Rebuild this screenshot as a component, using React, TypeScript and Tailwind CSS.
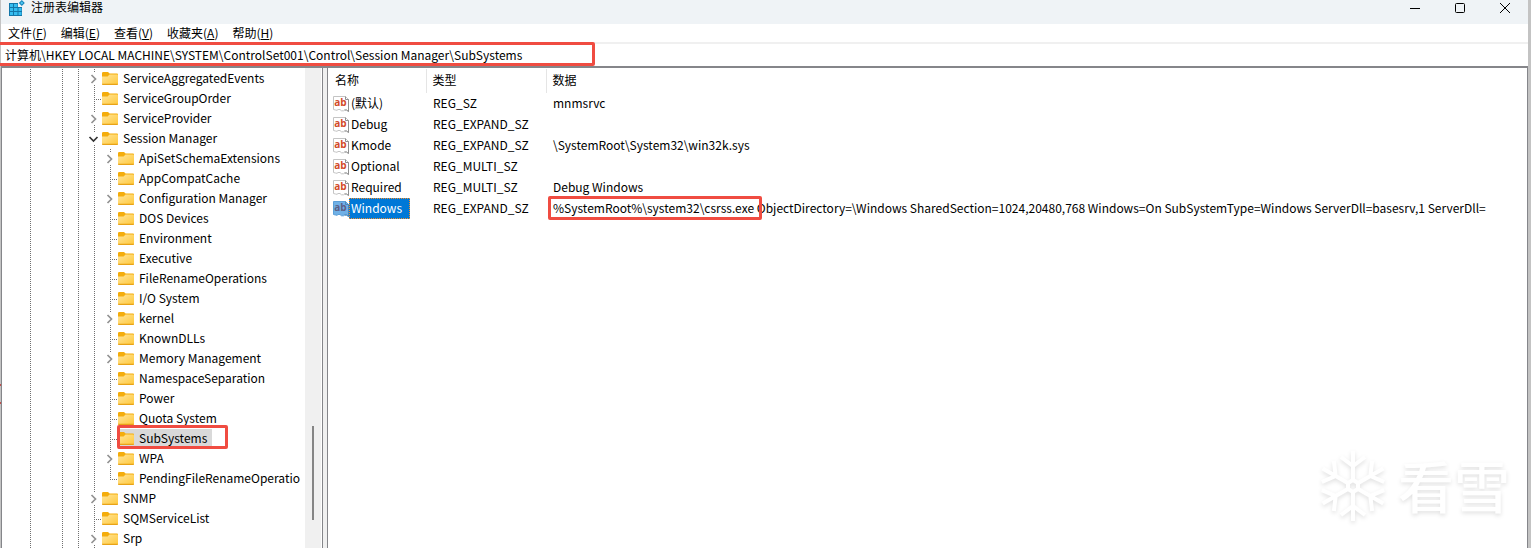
import React, { FC, ReactNode } from "react";

type Kind = "leaf" | "last" | "closed" | "open";

interface TreeItem {
  name: string;
  kind: Kind;
  child?: boolean;
  selected?: boolean;
}

const treeItems: TreeItem[] = [
  { name: "ServiceAggregatedEvents", kind: "closed" },
  { name: "ServiceGroupOrder", kind: "leaf" },
  { name: "ServiceProvider", kind: "closed" },
  { name: "Session Manager", kind: "open" },
  { name: "ApiSetSchemaExtensions", kind: "closed", child: true },
  { name: "AppCompatCache", kind: "leaf", child: true },
  { name: "Configuration Manager", kind: "closed", child: true },
  { name: "DOS Devices", kind: "leaf", child: true },
  { name: "Environment", kind: "leaf", child: true },
  { name: "Executive", kind: "leaf", child: true },
  { name: "FileRenameOperations", kind: "leaf", child: true },
  { name: "I/O System", kind: "leaf", child: true },
  { name: "kernel", kind: "closed", child: true },
  { name: "KnownDLLs", kind: "leaf", child: true },
  { name: "Memory Management", kind: "closed", child: true },
  { name: "NamespaceSeparation", kind: "leaf", child: true },
  { name: "Power", kind: "leaf", child: true },
  { name: "Quota System", kind: "leaf", child: true },
  { name: "SubSystems", kind: "leaf", child: true, selected: true },
  { name: "WPA", kind: "closed", child: true },
  { name: "PendingFileRenameOperatio", kind: "last", child: true },
  { name: "SNMP", kind: "closed" },
  { name: "SQMServiceList", kind: "leaf" },
  { name: "Srp", kind: "closed" },
];

const menus = [
  { label: "文件", mnemonic: "F" },
  { label: "编辑", mnemonic: "E" },
  { label: "查看", mnemonic: "V" },
  { label: "收藏夹", mnemonic: "A" },
  { label: "帮助", mnemonic: "H" },
];

const values = [
  { name: "(默认)", type: "REG_SZ", data: "mnmsrvc" },
  { name: "Debug", type: "REG_EXPAND_SZ", data: "" },
  { name: "Kmode", type: "REG_EXPAND_SZ", data: "\\SystemRoot\\System32\\win32k.sys" },
  { name: "Optional", type: "REG_MULTI_SZ", data: "" },
  { name: "Required", type: "REG_MULTI_SZ", data: "Debug Windows" },
];

const dotsDown = "w-px bg-[repeating-linear-gradient(to_bottom,#707070_0_1px,transparent_1px_2px)]";
const dotsAcross = "h-px bg-[repeating-linear-gradient(to_right,transparent_0_1px,#707070_1px_2px)]";

const Marker: FC<{ className: string }> = ({ className }) => (
  <span className={`pointer-events-none absolute z-10 rounded-xs border-3 border-[#f04c41] ${className}`} />
);

const Guide: FC = () => (
  <span className="flex h-5 w-4 shrink-0 pl-2">
    <span className={`h-full ${dotsDown}`} />
  </span>
);

const Node: FC<{ kind: Kind }> = ({ kind }) => {
  if (kind === "closed" || kind === "open") {
    return (
      <button
        aria-label={kind === "open" ? "Collapse" : "Expand"}
        className="flex h-5 w-4 shrink-0 flex-col justify-between"
      >
        <span className={`ml-2 h-1 ${dotsDown}`} />
        {kind === "open" ? (
          <svg viewBox="0 0 12 12" className="ml-px size-3" fill="none" stroke="#333" strokeWidth="1.7">
            <path d="M2.5 4l4 4 4-4" />
          </svg>
        ) : (
          <svg viewBox="0 0 12 12" className="ml-px size-3" fill="none" stroke="#929292" strokeWidth="1.7">
            <path d="M4.5 2l4 4-4 4" />
          </svg>
        )}
        <span className={`ml-2 h-1 ${dotsDown}`} />
      </button>
    );
  }
  return (
    <span className="flex h-5 w-4 shrink-0 items-start pl-2">
      <span className={kind === "last" ? `h-[11px] ${dotsDown}` : `h-full ${dotsDown}`} />
      <span className={`mt-[10px] grow ${dotsAcross}`} />
    </span>
  );
};

const Folder: FC = () => (
  <svg viewBox="0 0 16 16" className="size-4 shrink-0">
    <defs>
      <linearGradient id="folder" x1="0" y1="0" x2="1" y2="1">
        <stop offset="0" stopColor="#ffe59a" />
        <stop offset="1" stopColor="#ffc83a" />
      </linearGradient>
    </defs>
    <path d="M0 3V2.4C0 1.6.5 1 1.3 1H6l1.6 1.6h7.2c.7 0 1.2.5 1.2 1.2V6H0z" fill="#f4ad0c" />
    <path d="M0 5.4h5.6L7.5 3.5h7.2c.8 0 1.3.4 1.3 1.2v8c0 .7-.5 1.1-1.2 1.1H1.2c-.7 0-1.2-.4-1.2-1.1z" fill="url(#folder)" />
    <path d="M0 12.7h16c0 .8-.5 1.3-1.2 1.3H1.2C.5 14 0 13.5 0 12.7z" fill="#e8a317" />
  </svg>
);

const StringIcon: FC<{ active?: boolean }> = ({ active }) => (
  <svg viewBox="0 0 16 16" className="size-4 shrink-0">
    <path
      d="M.5.5h12l3 3v12l-2-1.5h-2l-1 .8h-2L7 13.500H5l-1 .8-1.500-.3-2-.5z"
      fill={active ? "#6fb0e6" : "#fff"}
      stroke={active ? "#5b9fd8" : "#c4c4c4"}
    />
    <path d="M12.5.5v3h3v12l-2-1.5h-2" fill="none" stroke={active ? "#4a86b8" : "#8f8f8f"} />
    <text
      x="7.5"
      y="10"
      textAnchor="middle"
      fontFamily="Open Sans, sans-serif"
      fontSize="10"
      fontWeight="700"
      fill={active ? "#5c5f86" : "#d24a2a"}
    >
      ab
    </text>
  </svg>
);

const TreeRow: FC<{ item: TreeItem }> = ({ item }) => (
  <li className="flex h-5 items-center whitespace-nowrap">
    <Guide />
    <span className="w-4 shrink-0" />
    <Guide />
    <Guide />
    {item.child && <Guide />}
    <Node kind={item.kind} />
    <span className={item.selected ? "relative flex h-5 items-center bg-[#d9d9d9]" : "flex h-5 items-center"}>
      <Folder />
      <span className={item.selected ? "px-[5px] pb-[2px]" : "pb-[2px] pl-[5px]"}>{item.name}</span>
      {item.selected && <Marker className="-top-1 -right-4 bottom-0 -left-px" />}
    </span>
  </li>
);

const Cell: FC<{ children?: ReactNode }> = ({ children }) => (
  <td className="h-[21px] p-0 pb-[2px] pl-[7px] whitespace-nowrap">{children}</td>
);

const Watermark: FC = () => (
  <div className="pointer-events-none absolute right-[18px] bottom-6 flex items-center gap-3 text-white drop-shadow-[0_2px_2px_rgba(0,0,0,0.12)]">
    <svg viewBox="0 0 66 76" className="h-[76px] w-[66px]" fill="none" stroke="currentColor" strokeWidth="4">
      <path d="M33 32l5 3v6l-5 3-5-3v-6z" />
      {[0, 60, 120, 180, 240, 300].map((angle) => (
        <path key={angle} d="M33 32V3M21 9l12 9 12-9" transform={`rotate(${angle} 33 38)`} />
      ))}
    </svg>
    <span className="pb-1 text-[56px] leading-[72px] font-medium">看雪</span>
  </div>
);

const App: FC = () => {
  return (
    <div className="flex h-screen overflow-hidden bg-[#c3c3c3] pr-[3px] font-['Noto_Sans_CJK_SC',sans-serif] text-xs text-black">
      <div className="flex w-px shrink-0 flex-col justify-end gap-4 pb-36">
        <span className="h-[2px] bg-[#c0504d]" />
        <span className="h-[2px] bg-[#c0504d]" />
      </div>
      <div className="relative flex min-w-0 grow flex-col bg-white">
        <header className="flex h-6 shrink-0 items-start justify-between bg-[#eff3f6]">
          <h1 className="flex h-4 items-center gap-[6px] pl-2">
            <svg viewBox="0 0 16 16" className="size-4">
              <path d="M0 3h13v13H0z" fill="#1476a8" />
              <path
                d="M1 4h3v3H1zM5 4h3.5v3H5zM1 8h3v3H1zM5 8h3.5v3H5zM9.5 8h3v3h-3zM1 12h3v3H1zM5 12h3.5v3H5zM9.5 12h3v3h-3z"
                fill="#35bdf0"
              />
              <path d="M9 2h5v5H9z" fill="#eff3f6" />
              <path d="M12.8 0l3 3-3 3-3-3z" fill="#1b87ba" />
              <path d="M12.8 1.5l1.5 1.5-1.5 1.5L11.3 3z" fill="#4fc8f4" />
            </svg>
            <span className="pb-[2px]">注册表编辑器</span>
          </h1>
          <div className="flex pr-px">
            <button aria-label="Minimize" className="flex h-4 w-[45px] items-center justify-center">
              <svg viewBox="0 0 10 10" className="size-[10px]" stroke="#000">
                <path d="M0 5.5h10" />
              </svg>
            </button>
            <button aria-label="Maximize" className="flex h-4 w-[45px] items-center justify-center">
              <svg viewBox="0 0 10 10" className="size-[10px]" fill="none" stroke="#000">
                <rect x=".5" y=".5" width="9" height="9" rx="1" />
              </svg>
            </button>
            <button aria-label="Close" className="flex h-4 w-[45px] items-center justify-center">
              <svg viewBox="0 0 10 10" className="size-[10px]" stroke="#000">
                <path d="M0 0l10 10M10 0L0 10" />
              </svg>
            </button>
          </div>
        </header>
        <nav className="flex h-[18px] shrink-0 items-center gap-[14px] pl-[7px]">
          {menus.map((menu) => (
            <button key={menu.mnemonic} className="leading-5">
              {menu.label}(<u>{menu.mnemonic}</u>)
            </button>
          ))}
        </nav>
        <div className="relative flex h-6 shrink-0 items-start border-t-2 border-[#f0f0f0]">
          <input
            aria-label="地址"
            className="h-5 grow px-1 outline-none"
            defaultValue="计算机\HKEY LOCAL MACHINE\SYSTEM\ControlSet001\Control\Session Manager\SubSystems"
          />
          <Marker className="-top-[2px] -left-1 h-6 w-[598px]" />
        </div>
        <main className="flex min-h-0 grow border-t-2 border-l border-[#85868a]">
          <div className="flex w-[321px] shrink-0 border-r border-[#85868a]">
            <ul className="min-w-0 grow overflow-hidden pt-px pl-5">
              {treeItems.map((item) => (
                <TreeRow key={item.name} item={item} />
              ))}
            </ul>
            <div className="mr-px flex w-4 shrink-0 flex-col items-center justify-end bg-[#f0f0f0] pb-7">
              <span className="h-[94px] w-[2px] bg-[#858585]" />
            </div>
          </div>
          <div className="w-1 shrink-0 bg-[#f0f0f0]" />
          <div className="min-w-0 grow overflow-hidden border-x border-[#85868a] pt-px">
            <table className="w-full table-fixed border-collapse text-left">
              <colgroup>
                <col className="w-[98px]" />
                <col className="w-[120px]" />
                <col />
              </colgroup>
              <thead>
                <tr>
                  <th className="h-6 border-r border-[#e5e5e5] p-0 pb-[2px] pl-[7px] font-normal">名称</th>
                  <th className="h-6 border-r border-[#e5e5e5] p-0 pb-[2px] pl-[6px] font-normal">类型</th>
                  <th className="h-6 p-0 pb-[2px] pl-[6px] font-normal">数据</th>
                </tr>
              </thead>
              <tbody>
                {values.map((value) => (
                  <tr key={value.name}>
                    <td className="h-[21px] p-0 pl-[5px]">
                      <span className="flex h-5 items-center gap-[2px]">
                        <StringIcon />
                        <span className="pb-[2px]">{value.name}</span>
                      </span>
                    </td>
                    <Cell>{value.type}</Cell>
                    <Cell>{value.data}</Cell>
                  </tr>
                ))}
                <tr>
                  <td className="h-[21px] p-0 pl-[5px]">
                    <span className="flex h-[21px] items-center">
                      <StringIcon active />
                      <span className="flex h-[21px] items-center border border-dotted border-[#f0902f] bg-[#0078d7] pr-[7px] pb-[2px] pl-px text-white">
                        Windows
                      </span>
                    </span>
                  </td>
                  <Cell>REG_EXPAND_SZ</Cell>
                  <Cell>
                    <span className="relative inline-block">
                      %SystemRoot%\system32\csrss.exe
                      <Marker className="-inset-y-1 -right-2 -left-[5px]" />
                    </span>{" "}
                    ObjectDirectory=\Windows SharedSection=1024,20480,768 Windows=On SubSystemType=Windows
                    ServerDll=basesrv,1 ServerDll=
                  </Cell>
                </tr>
              </tbody>
            </table>
          </div>
        </main>
        <Watermark />
      </div>
    </div>
  );
};

export default App;
